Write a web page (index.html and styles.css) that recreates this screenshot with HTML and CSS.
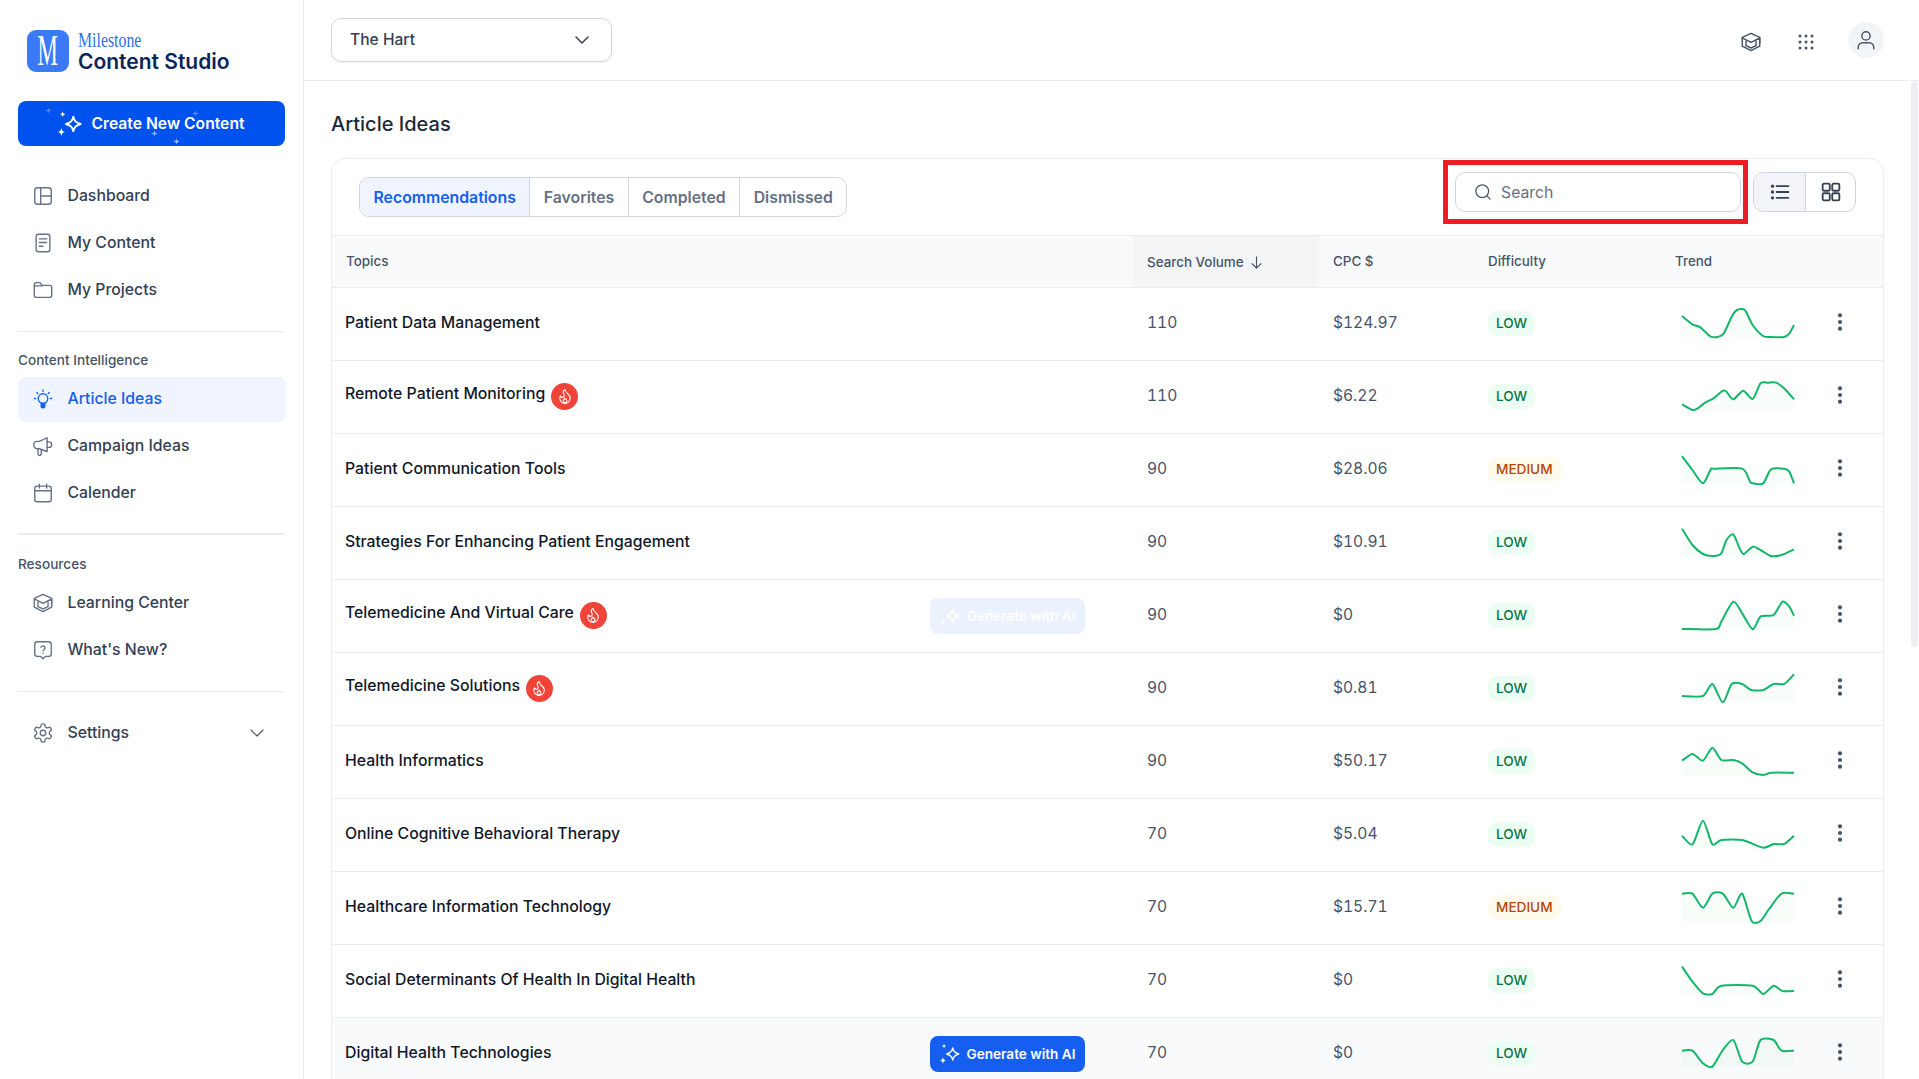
FILE: index.html
```html
<!DOCTYPE html>
<html lang="en">
<head>
    <meta charset="UTF-8">
    <meta name="viewport" content="width=device-width, initial-scale=1.0">
    <title>Article Ideas - Content Studio</title>
    <link rel="stylesheet" href="styles.css">
</head>
<body>
    <svg class="sprite" xmlns="http://www.w3.org/2000/svg">
        <symbol id="i-sparkle" viewBox="0 0 24 24">
            <path d="M14.5 6.5c.7 3.2 1.8 4.3 5.5 5.5-3.7 1.2-4.8 2.3-5.5 5.5-.7-3.2-1.8-4.3-5.5-5.5 3.7-1.2 4.8-2.3 5.5-5.5z" fill="none" stroke="currentColor" stroke-width="1.4" stroke-linejoin="round"/>
            <path d="M6.5 2.5c.3 1.4.7 1.8 2 2.2-1.3.4-1.7.8-2 2.2-.3-1.4-.7-1.8-2-2.2 1.3-.4 1.7-.8 2-2.2zM5.5 15c.4 1.9.9 2.4 2.7 3-1.8.6-2.3 1.1-2.7 3-.4-1.9-.9-2.4-2.7-3 1.8-.6 2.3-1.1 2.7-3z" fill="currentColor"/>
        </symbol>
        <symbol id="i-star" viewBox="0 0 10 10">
            <path d="M5 0c.4 3.2 1.3 4.3 5 5-3.7.7-4.6 1.8-5 5-.4-3.2-1.3-4.3-5-5 3.7-.7 4.6-1.8 5-5z" fill="currentColor"/>
        </symbol>
        <symbol id="i-dashboard" viewBox="0 0 24 24">
            <rect x="3" y="3" width="18" height="18" rx="3"/><path d="M9.5 3v18M9.5 12H21"/>
        </symbol>
        <symbol id="i-doc" viewBox="0 0 24 24">
            <rect x="4.5" y="2.5" width="15" height="19" rx="2.5"/><path d="M8 7.5h8M8 11.5h8M8 15.5h4"/>
        </symbol>
        <symbol id="i-folder" viewBox="0 0 24 24">
            <path d="M2.5 6a2 2 0 0 1 2-2h4.2l2.3 3h8.5a2 2 0 0 1 2 2v9a2 2 0 0 1-2 2h-15a2 2 0 0 1-2-2z"/>
            <path d="M2.5 7.5H11"/>
        </symbol>
        <symbol id="i-bulb" viewBox="0 0 24 24">
            <circle cx="12" cy="11.5" r="5.2"/>
            <path d="M10 17.5h4v2a2 2 0 0 1-4 0z" fill="currentColor"/>
            <path d="M12 2v1.5M2.5 11.5H4M20 11.5h1.5M5.3 5l1 1M18.7 5l-1 1"/>
        </symbol>
        <symbol id="i-megaphone" viewBox="0 0 24 24">
            <path d="M16.5 3v15L8 15H5.5A3.5 3.5 0 0 1 2 11.500v-1A3.500 3.500 0 0 1 5.500 7H8z"/>
            <path d="M16.500 7.500h2a3 3 0 0 1 0 6h-2M6.500 15v5.500a1.800 1.800 0 0 0 3.600 0V16"/>
        </symbol>
        <symbol id="i-calendar" viewBox="0 0 24 24">
            <rect x="3" y="4.5" width="18" height="17" rx="2.5"/><path d="M3 9.5h18M8 2.5v4M16 2.5v4"/>
        </symbol>
        <symbol id="i-cap" viewBox="0 0 24 24">
            <path d="M12 2.5l9.5 4.5v9.5l-9.5 5-9.5-5V7z"/>
            <path d="M2.5 7.5l9.5 5 9.5-5M6.5 10.500v5.500l5.500 2.500 5.500-2.500v-5.500M21.500 8v5"/>
        </symbol>
        <symbol id="i-help" viewBox="0 0 24 24">
            <path d="M6 3h12a3 3 0 0 1 3 3v10a3 3 0 0 1-3 3h-3.500L12 21.500 9.500 19H6a3 3 0 0 1-3-3V6a3 3 0 0 1 3-3z"/>
            <path d="M9.700 9a2.400 2.400 0 0 1 4.600.8c0 1.600-2.300 2-2.300 3.200M12 15.500v.2"/>
        </symbol>
        <symbol id="i-gear" viewBox="0 0 24 24">
            <path d="M12.220 2h-.44a2 2 0 0 0-2 2v.18a2 2 0 0 1-1 1.730l-.43.250a2 2 0 0 1-2 0l-.15-.080a2 2 0 0 0-2.730.730l-.22.380a2 2 0 0 0 .730 2.730l.15.100a2 2 0 0 1 1 1.720v.510a2 2 0 0 1-1 1.740l-.15.090a2 2 0 0 0-.730 2.730l.22.380a2 2 0 0 0 2.730.730l.15-.080a2 2 0 0 1 2 0l.43.250a2 2 0 0 1 1 1.730V20a2 2 0 0 0 2 2h.44a2 2 0 0 0 2-2v-.18a2 2 0 0 1 1-1.730l.43-.250a2 2 0 0 1 2 0l.15.080a2 2 0 0 0 2.730-.730l.22-.390a2 2 0 0 0-.730-2.730l-.15-.080a2 2 0 0 1-1-1.740v-.5a2 2 0 0 1 1-1.740l.15-.090a2 2 0 0 0 .730-2.730l-.22-.380a2 2 0 0 0-2.730-.730l-.15.080a2 2 0 0 1-2 0l-.43-.250a2 2 0 0 1-1-1.730V4a2 2 0 0 0-2-2z"/>
            <circle cx="12" cy="12" r="3"/>
        </symbol>
        <symbol id="i-chevron" viewBox="0 0 24 24"><path d="M4 8l8 8 8-8"/></symbol>
        <symbol id="i-search" viewBox="0 0 24 24"><circle cx="11" cy="11" r="8.5"/><path d="M21.5 21.5l-4-4"/></symbol>
        <symbol id="i-dots" viewBox="0 0 24 24">
            <g fill="currentColor" stroke="none">
                <circle cx="4" cy="4" r="2"/><circle cx="12" cy="4" r="2"/><circle cx="20" cy="4" r="2"/>
                <circle cx="4" cy="12" r="2"/><circle cx="12" cy="12" r="2"/><circle cx="20" cy="12" r="2"/>
                <circle cx="4" cy="20" r="2"/><circle cx="12" cy="20" r="2"/><circle cx="20" cy="20" r="2"/>
            </g>
        </symbol>
        <symbol id="i-user" viewBox="0 0 24 24">
            <circle cx="12" cy="7.5" r="4.5"/><path d="M3.5 21.5V20a5 5 0 0 1 5-5h7a5 5 0 0 1 5 5v1.5"/>
        </symbol>
        <symbol id="i-list" viewBox="0 0 24 24">
            <path d="M8 5h14M8 12h14M8 19h14"/>
            <g fill="currentColor" stroke="none"><circle cx="3" cy="5" r="2"/><circle cx="3" cy="12" r="2"/><circle cx="3" cy="19" r="2"/></g>
        </symbol>
        <symbol id="i-grid" viewBox="0 0 24 24">
            <rect x="2" y="2" width="8.5" height="8.5" rx="1.5"/><rect x="13.5" y="2" width="8.5" height="8.5" rx="1.5"/>
            <rect x="2" y="13.5" width="8.5" height="8.5" rx="1.5"/><rect x="13.5" y="13.5" width="8.5" height="8.5" rx="1.5"/>
        </symbol>
        <symbol id="i-arrow" viewBox="0 0 24 24"><path d="M12 3v18M5 14l7 7 7-7"/></symbol>
        <symbol id="i-kebab" viewBox="0 0 24 24">
            <g fill="currentColor"><circle cx="12" cy="4" r="2.5"/><circle cx="12" cy="12" r="2.5"/><circle cx="12" cy="20" r="2.5"/></g>
        </symbol>
        <symbol id="i-flame" viewBox="0 0 24 24">
            <path d="M8.5 12.5A2.5 2.5 0 0 0 11 10c0-1.38-.5-2-1-3-1-2-.2-3.5 2-5 .5 2.5 2 4.4 4 6 2 1.6 3 3.5 3 5.5a7 7 0 1 1-14 0c0-1.15.43-2.3 1-3a2.5 2.5 0 0 0 2.5 2z"/>
            <path d="M12 19.5a2.5 2.5 0 0 0 2.5-2.5c0-1.5-1.5-2-2.5-3.5-1 1.5-2.5 2-2.5 3.5a2.5 2.5 0 0 0 2.5 2.5z"/>
        </symbol>
    </svg>

    <aside class="sidebar">
        <div class="brand">
            <div class="brand-mark"><span>M</span></div>
            <div class="brand-text">
                <span class="brand-top">Milestone</span>
                <span class="brand-name">Content Studio</span>
            </div>
        </div>

        <button class="create-btn">
            <svg class="twinkle t1"><use href="#i-star"/></svg>
            <svg class="twinkle t2"><use href="#i-star"/></svg>
            <svg class="twinkle t3"><use href="#i-star"/></svg>
            <svg class="twinkle t4"><use href="#i-star"/></svg>
            <svg class="create-icon"><use href="#i-sparkle"/></svg>
            Create New Content
        </button>

        <nav class="nav-group first">
            <a class="nav-item"><svg class="icon"><use href="#i-dashboard"/></svg>Dashboard</a>
            <a class="nav-item"><svg class="icon"><use href="#i-doc"/></svg>My Content</a>
            <a class="nav-item"><svg class="icon"><use href="#i-folder"/></svg>My Projects</a>
        </nav>
        <hr class="divider">
        <div class="nav-label">Content Intelligence</div>
        <nav class="nav-group">
            <a class="nav-item active"><svg class="icon"><use href="#i-bulb"/></svg>Article Ideas</a>
            <a class="nav-item"><svg class="icon"><use href="#i-megaphone"/></svg>Campaign Ideas</a>
            <a class="nav-item"><svg class="icon"><use href="#i-calendar"/></svg>Calender</a>
        </nav>
        <hr class="divider thick">
        <div class="nav-label">Resources</div>
        <nav class="nav-group">
            <a class="nav-item"><svg class="icon"><use href="#i-cap"/></svg>Learning Center</a>
            <a class="nav-item"><svg class="icon"><use href="#i-help"/></svg>What's New?</a>
        </nav>
        <hr class="divider">
        <nav class="nav-group">
            <a class="nav-item"><svg class="icon"><use href="#i-gear"/></svg>Settings<svg class="icon nav-chevron"><use href="#i-chevron"/></svg></a>
        </nav>
    </aside>

    <div class="main">
        <header class="topbar">
            <div class="site-select">The Hart<svg class="select-chevron"><use href="#i-chevron"/></svg></div>
            <div class="top-actions">
                <svg class="top-icon cap"><use href="#i-cap"/></svg>
                <svg class="top-icon dots"><use href="#i-dots"/></svg>
                <div class="avatar"><svg class="top-icon"><use href="#i-user"/></svg></div>
            </div>
        </header>

        <main class="content">
            <h1 class="page-title">Article Ideas</h1>
            <section class="card">
                <div class="toolbar">
                    <div class="tabs">
                        <span class="tab active">Recommendations</span>
                        <span class="tab">Favorites</span>
                        <span class="tab">Completed</span>
                        <span class="tab">Dismissed</span>
                    </div>
                    <div class="search">
                        <svg class="search-icon"><use href="#i-search"/></svg>
                        <span>Search</span>
                        <span class="callout"></span>
                    </div>
                    <div class="view-toggle">
                        <span class="view-btn active"><svg><use href="#i-list"/></svg></span>
                        <span class="view-btn"><svg><use href="#i-grid"/></svg></span>
                    </div>
                </div>

                <table class="ideas">
                    <colgroup>
                        <col class="c-topic"><col class="c-volume"><col class="c-cpc"><col class="c-diff"><col class="c-trend"><col>
                    </colgroup>
                    <thead>
                        <tr>
                            <th>Topics</th>
                            <th class="sorted"><span>Search Volume<svg class="sort-arrow"><use href="#i-arrow"/></svg></span></th>
                            <th>CPC $</th>
                            <th>Difficulty</th>
                            <th>Trend</th>
                            <th></th>
                        </tr>
                    </thead>
                    <tbody>
                        <tr>
                            <td><div class="topic"><span class="topic-name">Patient Data Management</span></div></td>
                            <td>110</td><td>$124.97</td><td><span class="badge low">LOW</span></td>
                            <td><svg class="spark" viewBox="0 0 214 120" preserveAspectRatio="none" data-points="0,36 20,61 35,70 55,98 70,98 80,88 95,38 105,18 120,18 135,63 155,96 170,99 195,99 205,88 214,63"></svg></td>
                            <td><svg class="kebab"><use href="#i-kebab"/></svg></td>
                        </tr>
                        <tr>
                            <td><div class="topic"><span class="topic-name">Remote Patient Monitoring</span><span class="hot"><svg><use href="#i-flame"/></svg></span></div></td>
                            <td>110</td><td>$6.22</td><td><span class="badge low">LOW</span></td>
                            <td><svg class="spark" viewBox="0 0 214 120" preserveAspectRatio="none" data-points="0,82 20,99 30,94 45,76 60,64 78,41 85,44 98,67 117,41 135,66 150,19 165,17 180,17 195,34 214,67"></svg></td>
                            <td><svg class="kebab"><use href="#i-kebab"/></svg></td>
                        </tr>
                        <tr>
                            <td><div class="topic"><span class="topic-name">Patient Communication Tools</span></div></td>
                            <td>90</td><td>$28.06</td><td><span class="badge medium">MEDIUM</span></td>
                            <td><svg class="spark" viewBox="0 0 214 120" preserveAspectRatio="none" data-points="0,18 20,60 40,100 55,58 62,56 115,56 130,95 135,100 155,100 170,58 195,56 205,65 214,100"></svg></td>
                            <td><svg class="kebab"><use href="#i-kebab"/></svg></td>
                        </tr>
                        <tr>
                            <td><div class="topic"><span class="topic-name">Strategies For Enhancing Patient Engagement</span></div></td>
                            <td>90</td><td>$10.91</td><td><span class="badge low">LOW</span></td>
                            <td><svg class="spark" viewBox="0 0 214 120" preserveAspectRatio="none" data-points="0,17 20,66 40,93 60,99 75,91 85,51 98,34 110,76 118,93 135,71 150,81 170,99 190,96 214,79"></svg></td>
                            <td><svg class="kebab"><use href="#i-kebab"/></svg></td>
                        </tr>
                        <tr>
                            <td><div class="topic"><span class="topic-name">Telemedicine And Virtual Care</span><span class="hot"><svg><use href="#i-flame"/></svg></span><button class="gen-btn faded"><svg><use href="#i-sparkle"/></svg>Generate with AI</button></div></td>
                            <td>90</td><td>$0</td><td><span class="badge low">LOW</span></td>
                            <td><svg class="spark" viewBox="0 0 214 120" preserveAspectRatio="none" data-points="0,99 65,99 75,77 98,17 115,52 135,100 150,62 175,57 192,17 205,32 214,59"></svg></td>
                            <td><svg class="kebab"><use href="#i-kebab"/></svg></td>
                        </tr>
                        <tr>
                            <td><div class="topic"><span class="topic-name">Telemedicine Solutions</span><span class="hot"><svg><use href="#i-flame"/></svg></span></div></td>
                            <td>90</td><td>$0.81</td><td><span class="badge low">LOW</span></td>
                            <td><svg class="spark" viewBox="0 0 214 120" preserveAspectRatio="none" data-points="0,81 40,81 58,45 78,100 95,45 115,45 132,63 155,63 175,45 195,45 214,16"></svg></td>
                            <td><svg class="kebab"><use href="#i-kebab"/></svg></td>
                        </tr>
                        <tr>
                            <td><div class="topic"><span class="topic-name">Health Informatics</span></div></td>
                            <td>90</td><td>$50.17</td><td><span class="badge low">LOW</span></td>
                            <td><svg class="spark" viewBox="0 0 214 120" preserveAspectRatio="none" data-points="0,56 20,36 40,56 58,17 75,54 98,54 115,64 135,91 155,99 170,92 214,92"></svg></td>
                            <td><svg class="kebab"><use href="#i-kebab"/></svg></td>
                        </tr>
                        <tr>
                            <td><div class="topic"><span class="topic-name">Online Cognitive Behavioral Therapy</span></div></td>
                            <td>70</td><td>$5.04</td><td><span class="badge low">LOW</span></td>
                            <td><svg class="spark" viewBox="0 0 214 120" preserveAspectRatio="none" data-points="0,62 20,88 40,17 58,88 75,75 115,75 155,98 175,87 195,87 214,62"></svg></td>
                            <td><svg class="kebab"><use href="#i-kebab"/></svg></td>
                        </tr>
                        <tr>
                            <td><div class="topic"><span class="topic-name">Healthcare Information Technology</span></div></td>
                            <td>70</td><td>$15.71</td><td><span class="badge medium">MEDIUM</span></td>
                            <td><svg class="spark" viewBox="0 0 214 120" preserveAspectRatio="none" data-points="0,17 20,17 40,59 58,17 78,17 98,59 115,17 133,99 150,99 165,66 190,17 214,17"></svg></td>
                            <td><svg class="kebab"><use href="#i-kebab"/></svg></td>
                        </tr>
                        <tr>
                            <td><div class="topic"><span class="topic-name">Social Determinants Of Health In Digital Health</span></div></td>
                            <td>70</td><td>$0</td><td><span class="badge low">LOW</span></td>
                            <td><svg class="spark" viewBox="0 0 214 120" preserveAspectRatio="none" data-points="0,17 20,62 40,97 58,99 75,74 135,74 155,99 175,74 192,90 214,90"></svg></td>
                            <td><svg class="kebab"><use href="#i-kebab"/></svg></td>
                        </tr>
                        <tr class="hovered">
                            <td><div class="topic"><span class="topic-name">Digital Health Technologies</span><button class="gen-btn"><svg><use href="#i-sparkle"/></svg>Generate with AI</button></div></td>
                            <td>70</td><td>$0</td><td><span class="badge low">LOW</span></td>
                            <td><svg class="spark" viewBox="0 0 214 120" preserveAspectRatio="none" data-points="0,50 20,50 40,88 58,98 78,48 98,18 115,83 135,83 150,18 175,18 190,50 214,50"></svg></td>
                            <td><svg class="kebab"><use href="#i-kebab"/></svg></td>
                        </tr>
                    </tbody>
                </table>
            </section>
        </main>
    </div>

    <script src="spark.js"></script>
</body>
</html>
```

FILE: styles.css
```css
* { margin: 0; padding: 0; box-sizing: border-box; }
html, body { height: 100%; }
body {
    font-family: 'Inter', 'Liberation Sans', sans-serif;
    display: flex;
    overflow: hidden;
    background: #fff;
    color: #101828;
}
.sprite { display: none; }
svg { display: block; }
button { font-family: inherit; border: none; }

/* sidebar */
.sidebar {
    width: 304px;
    flex-shrink: 0;
    height: 100%;
    padding: 30px 18px 0;
    border-right: 1px solid #eaecf0;
}
.brand { display: flex; align-items: center; gap: 9px; padding-left: 9px; height: 42px; }
.brand-mark {
    width: 42px;
    height: 42px;
    border-radius: 9px;
    background: #3b79f6;
    color: #fff;
    display: flex;
    align-items: center;
    justify-content: center;
}
.brand-mark span {
    font-family: 'Liberation Serif', serif;
    font-size: 44px;
    line-height: 42px;
    transform: scaleX(.52);
}
.brand-text { display: flex; flex-direction: column; }
.brand-top {
    font-family: 'Liberation Serif', serif;
    font-size: 22px;
    line-height: 21px;
    color: #2f6fed;
    transform: scaleX(.72);
    transform-origin: left center;
}
.brand-name { font-size: 21px; line-height: 24px; font-weight: 600; color: #0b2559; }

.create-btn {
    position: relative;
    display: flex;
    align-items: center;
    justify-content: center;
    gap: 5px;
    width: 267px;
    height: 45px;
    margin-top: 29px;
    padding-right: 4px;
    border-radius: 8px;
    background: #0052ee;
    color: #fff;
    font-size: 15.7px;
    font-weight: 600;
}
.create-icon { width: 32px; height: 32px; }
.twinkle { position: absolute; width: 7px; height: 7px; color: rgba(255,255,255,.3); }
.t1 { left: 27px; top: 6px; }
.t2 { left: 174px; top: 9px; }
.t3 { left: 133px; top: 29px; color: rgba(255,255,255,.55); }
.t4 { left: 155px; top: 37px; color: rgba(255,255,255,.6); }

.nav-group { display: flex; flex-direction: column; gap: 2px; }
.nav-group.first { margin-top: 28px; }
.nav-item {
    display: flex;
    align-items: center;
    gap: 13.5px;
    height: 45px;
    padding: 0 0 2px 14px;
    border-radius: 8px;
    font-size: 15.8px;
    font-weight: 500;
    color: #344054;
}
.nav-item.active { background: #eff4ff; color: #155eef; width: 268px; }
.icon {
    width: 22px;
    height: 22px;
    flex-shrink: 0;
    fill: none;
    stroke: #667085;
    stroke-width: 1.5;
    stroke-linecap: round;
    stroke-linejoin: round;
}
.nav-item.active .icon { stroke: #155eef; color: #155eef; }
.nav-item .nav-chevron { margin-left: auto; margin-right: 19px; width: 18px; height: 18px; stroke: #475467; }
.divider { border: none; height: 1px; background: #eaecf0; margin: 18px 0 19px; width: 267px; }
.divider.thick { height: 2px; margin: 17px 0 20px; }
.nav-label { height: 18px; line-height: 18px; margin-bottom: 8px; font-size: 13.6px; font-weight: 500; color: #475467; }

/* top bar */
.main { flex: 1; min-width: 0; height: 100%; display: flex; flex-direction: column; position: relative; }
.topbar {
    height: 81px;
    flex-shrink: 0;
    display: flex;
    align-items: center;
    justify-content: space-between;
    padding: 0 35px 0 27px;
    border-bottom: 1px solid #eaecf0;
}
.site-select {
    width: 281px;
    height: 44px;
    padding-left: 18px;
    margin-top: -1px;
    line-height: 42px;
    border: 1px solid #d0d5dd;
    border-radius: 10px;
    box-shadow: 0 1px 2px rgba(16,24,40,.05);
    font-size: 15.6px;
    font-weight: 500;
    color: #344054;
    display: flex;
    align-items: flex-start;
    justify-content: space-between;
}
.select-chevron {
    width: 18px;
    height: 18px;
    margin: 12px 20px 0 0;
    fill: none;
    stroke: #344054;
    stroke-width: 2;
    stroke-linecap: round;
    stroke-linejoin: round;
}
.top-actions { display: flex; align-items: center; gap: 33px; color: #475467; }
.top-icon { width: 22px; height: 22px; fill: none; stroke: #475467; stroke-width: 1.6; stroke-linecap: round; stroke-linejoin: round; }
.top-icon.cap { margin: 3px 2px 0 0; }
.top-icon.dots { width: 18px; height: 18px; margin-top: 3px; }
.avatar {
    width: 36px;
    height: 36px;
    border-radius: 50%;
    background: #f2f4f7;
    display: flex;
    align-items: center;
    justify-content: center;
}

/* content */
.content {
    flex: 1;
    overflow: hidden;
    padding: 31px 35px 0 27px;
}
.page-title { font-size: 20px; line-height: 24px; font-weight: 500; color: #1d2939; margin-bottom: 22px; }
.card { border: 1px solid #eaecf0; border-radius: 14px 14px 0 0; min-height: 1000px; }
.toolbar {
    display: flex;
    align-items: flex-start;
    height: 77px;
    padding: 13px 27px 0 27px;
    border-bottom: 1px solid #eaecf0;
}
.tabs {
    display: flex;
    height: 40px;
    margin-top: 5px;
    border: 1px solid #d0d5dd;
    border-radius: 10px;
    overflow: hidden;
}
.tab {
    display: flex;
    align-items: center;
    padding: 0 13.5px;
    border-left: 1px solid #d0d5dd;
    font-size: 15.8px;
    font-weight: 600;
    color: #667085;
}
.tab:first-child { border-left: none; }
.tab.active { background: #eff4ff; color: #155eef; }
.search {
    position: relative;
    display: flex;
    align-items: center;
    gap: 9px;
    width: 286px;
    height: 40px;
    margin-left: auto;
    padding-left: 18px;
    border: 1px solid #d0d5dd;
    border-radius: 10px;
    font-size: 15.8px;
    color: #667085;
}
.search-icon { width: 18px; height: 18px; fill: none; stroke: #475467; stroke-width: 1.6; stroke-linecap: round; }
.callout { position: absolute; inset: -13px -8px -13px -13px; border: 5px solid #ee1c25; }
.view-toggle { display: flex; height: 40px; margin-left: 12px; border: 1px solid #d0d5dd; border-radius: 10px; overflow: hidden; }
.view-btn { width: 50px; display: flex; align-items: center; justify-content: center; }
.view-btn + .view-btn { border-left: 1px solid #d0d5dd; }
.view-btn.active { background: #f2f4f7; width: 51px; }
.view-btn svg { width: 20px; height: 20px; fill: none; stroke: #344054; stroke-width: 2.2; color: #344054; stroke-linecap: round; }

/* table */
.ideas { width: 100%; border-collapse: separate; border-spacing: 0; table-layout: fixed; }
.c-topic { width: 801px; }
.c-volume { width: 186px; }
.c-cpc { width: 155px; }
.c-diff { width: 187px; }
.c-trend { width: 158px; }
.ideas th {
    height: 52px;
    padding: 0 14px 2px;
    text-align: left;
    font-size: 13.4px;
    font-weight: 500;
    color: #475467;
    background: #f9fafb;
    border-bottom: 1px solid #eaecf0;
}
.ideas th.sorted { background: #f4f5f6; padding: 1px 14px 0; }
.ideas th.sorted span { display: flex; align-items: center; gap: 5px; }
.sort-arrow { width: 15px; height: 15px; fill: none; stroke: #475467; stroke-width: 1.8; stroke-linecap: round; stroke-linejoin: round; }
.ideas td {
    height: 73px;
    padding: 0 14px 4px;
    font-size: 15.6px;
    font-variant-numeric: tabular-nums;
    color: #475467;
    border-bottom: 1px solid #eaecf0;
}
.ideas td:first-child { padding: 0 48px 3px 13px; }
.ideas td:nth-child(4) { padding-bottom: 2px; }
.ideas td:nth-child(5) { padding: 0 0 0 21px; }
.ideas td:last-child { padding: 0 0 4px; }
.hovered td { background: #f9fafb; }
.topic { display: flex; align-items: center; gap: 6px; height: 36px; }
.topic-name { font-weight: 500; font-size: 15.8px; color: #101828; }
.topic:has(.hot) .topic-name { margin-bottom: 5px; }
.hot {
    width: 27px;
    height: 27px;
    margin-top: 2px;
    border-radius: 50%;
    background: #f04438;
    display: flex;
    align-items: center;
    justify-content: center;
}
.hot svg { width: 18px; height: 18px; fill: none; stroke: #fff; stroke-width: 1.4; stroke-linejoin: round; }
.gen-btn {
    display: flex;
    align-items: center;
    justify-content: center;
    gap: 4px;
    width: 155px;
    height: 36px;
    margin-left: auto;
    margin-top: 3px;
    padding-right: 3px;
    border-radius: 8px;
    background: #155eef;
    color: #fff;
    font-size: 13.6px;
    font-weight: 600;
}
.gen-btn svg { width: 26px; height: 26px; }
.gen-btn.faded { opacity: .08; }
.badge {
    display: inline-flex;
    align-items: center;
    height: 25px;
    padding: 0 8px;
    border-radius: 9px;
    font-size: 13.6px;
    font-weight: 500;
}
.badge.low { background: #ecfdf3; color: #067647; }
.badge.medium { background: #fffaeb; color: #b54708; }
.spark { width: 112px; height: 40px; overflow: visible; }
.spark .line { fill: none; stroke: #12b76a; stroke-width: 2; vector-effect: non-scaling-stroke; stroke-linejoin: round; }
.spark .area { fill: rgba(18,183,106,.03); }
.kebab { width: 20px; height: 20px; margin-left: 11px; color: #475467; }

/* page scrollbar */
.main::after {
    content: '';
    position: absolute;
    top: 81px;
    right: 1px;
    width: 7px;
    height: 566px;
    border-radius: 4px;
    background: #eceef2;
}
```

FILE: spark.js
```js
// turn each sparkline's data-points into a smooth line with a faint area below it
const NS = 'http://www.w3.org/2000/svg';

function smoothPath(pts) {
    let d = `M${pts[0][0]} ${pts[0][1]}`;
    for (let i = 0; i < pts.length - 1; i++) {
        const p0 = pts[i - 1] || pts[i];
        const p1 = pts[i];
        const p2 = pts[i + 1];
        const p3 = pts[i + 2] || p2;
        const c1x = p1[0] + (p2[0] - p0[0]) / 8;
        const c1y = p1[1] + (p2[1] - p0[1]) / 8;
        const c2x = p2[0] - (p3[0] - p1[0]) / 8;
        const c2y = p2[1] - (p3[1] - p1[1]) / 8;
        d += `C${c1x} ${c1y} ${c2x} ${c2y} ${p2[0]} ${p2[1]}`;
    }
    return d;
}

document.querySelectorAll('.spark').forEach(svg => {
    const pts = svg.dataset.points.split(' ').map(p => p.split(',').map(Number));
    const line = smoothPath(pts);

    const area = document.createElementNS(NS, 'path');
    area.setAttribute('class', 'area');
    area.setAttribute('d', `${line}L214 100L0 100Z`);
    svg.appendChild(area);

    const path = document.createElementNS(NS, 'path');
    path.setAttribute('class', 'line');
    path.setAttribute('d', line);
    svg.appendChild(path);
});
```
